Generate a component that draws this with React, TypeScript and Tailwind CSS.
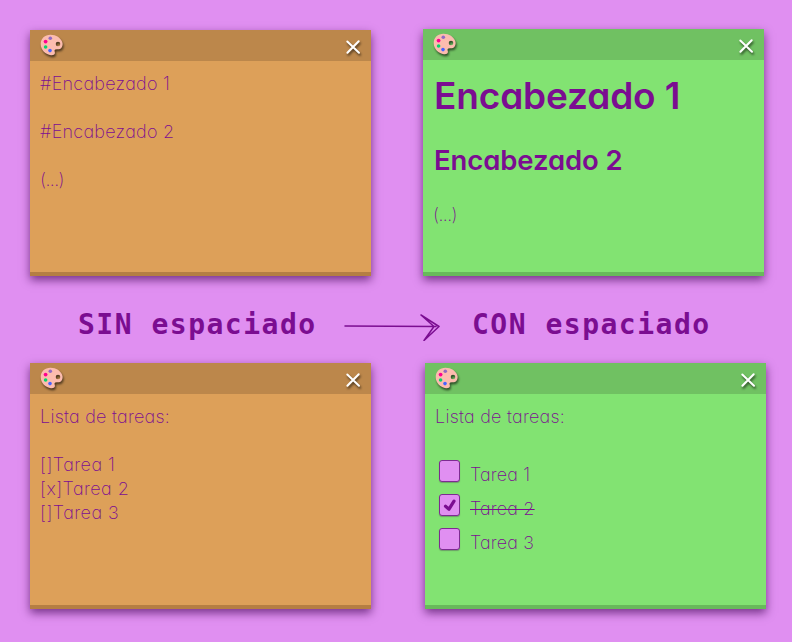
import type { ReactNode } from 'react';

function Palette() {
  return (
    <svg className="h-[26px] w-[26px] overflow-visible drop-shadow-[1px_2px_1px_rgba(0,0,0,0.6)]" viewBox="0 0 26 26">
      <path
        fillRule="evenodd"
        fill="#fcbcaf"
        d="M11.500 1.700C5.800 1.700 1.700 5.600 1.700 11c0 6 5 10.800 10.300 11.200 2.600.2 4.300-.8 3.900-2.600-.3-1.500-.8-2.600.4-3.100 2-.7 4.500.2 6-1.600 1.400-1.700 1.700-3.600.9-5.800C21.700 4.800 17.400 1.700 11.500 1.700ZM19 8.700a2.300 2.300 0 1 1 0 4.600 2.300 2.300 0 0 1 0-4.600Z"
      />
      <circle cx="11.300" cy="5.300" r="1.800" fill="#9269c4" />
      <circle cx="6.600" cy="8.600" r="1.900" fill="#ff0090" />
      <circle cx="6.600" cy="14" r="1.800" fill="#08d66b" />
      <circle cx="11" cy="17.600" r="1.800" fill="#4763ff" />
    </svg>
  );
}

function Close() {
  return (
    <svg className="h-4 w-4 overflow-visible drop-shadow-[1px_2px_1px_rgba(0,0,0,0.6)]" viewBox="0 0 16 16" fill="none" stroke="#fff" strokeWidth="2" strokeLinecap="round">
      <path d="M2.300 2.500 14 13.700M13.700 2.300 2.400 13.800" />
    </svg>
  );
}

function Note({ color, tall = false, children }: { color: 'orange' | 'green'; tall?: boolean; children: ReactNode }) {
  const orange = color === 'orange';
  return (
    <section
      className={`flex w-[341px] shrink-0 flex-col border-b-4 shadow-[0_4px_9px_rgba(60,0,80,0.65)] ${tall ? 'h-[247px]' : 'h-[246px]'} ${
        orange ? 'border-[#b57e43] bg-[#dda059]' : 'border-[#68b95b] bg-[#82e372]'
      }`}
    >
      <header className={`flex h-[31px] shrink-0 items-center justify-between pr-[10px] pl-[9px] ${orange ? 'bg-[#bc874b]' : 'bg-[#70c162]'}`}>
        <Palette />
        <div className="pt-[2px]"><Close /></div>
      </header>
      <div className="flex flex-col pl-[10px]">{children}</div>
    </section>
  );
}

function Task({ label, done = false }: { label: string; done?: boolean }) {
  return (
    <div className="flex h-[34px] items-center">
      <span className="mb-[6px] ml-1 flex h-[22px] w-[21px] items-center justify-center rounded-[3px] border border-[#7d2b91] bg-[#e08ff1] shadow-[0_1px_1px_rgba(60,0,80,0.3)]">
        {done && (
          <svg className="h-[14px] w-[14px]" viewBox="0 0 14 14" fill="none" stroke="#7b0d91" strokeWidth="3.200" strokeLinecap="round" strokeLinejoin="round">
            <path d="m2.500 8.300 3.500 2.900 5-8" />
          </svg>
        )}
      </span>
      <span className={`ml-[10px] mt-px tracking-[0.15px] ${done ? 'line-through decoration-1' : ''}`}>{label}</span>
    </div>
  );
}

function Caption({ children }: { children: ReactNode }) {
  return (
    <h2 className="mt-[10px] w-[238px] whitespace-pre font-['DejaVu_Sans_Mono',monospace] text-[28px] leading-[36px] font-bold tracking-[1.5px]">{children}</h2>
  );
}

export default function App() {
  return (
    <main className="h-[642px] w-[792px] overflow-hidden bg-[#e08ff1] pt-[30px] pl-[30px] font-['Inter',sans-serif] text-[18px] leading-6 font-[250] tracking-[0.25px] text-[#7b0d91] [font-feature-settings:'cv11']">
      <div className="flex h-[246px] gap-[52px]">
        <Note color="orange">
          <p className="mt-[11px]">#Encabezado 1</p>
          <p className="mt-6">#Encabezado 2</p>
          <p className="mt-6 tracking-[-0.6px]">(...)</p>
        </Note>
        <div className="-mt-px">
          <Note color="green" tall>
            <h1 className="mt-[14px] ml-px text-[37px] leading-[44px] font-[590] tracking-[-0.15px]">Encabezado 1</h1>
            <h2 className="mt-[24px] ml-px text-[27.500px] leading-9 font-[590] tracking-[-0.1px]">Encabezado 2</h2>
            <p className="mt-[25px] tracking-[-0.6px]">(...)</p>
          </Note>
        </div>
      </div>
      <div className="flex h-[87px] items-center pl-[48px]">
        <Caption>SIN espaciado</Caption>
        <svg className="mx-[28px] mt-[13px] h-[30px] w-[100px]" viewBox="0 0 100 30" fill="none" stroke="#7b0d91" strokeWidth="1.500" strokeLinecap="round" strokeLinejoin="round">
          <path d="m1 15 91 .6M77 4l18 11.500-15 14L90 15.500 77 4Z" />
        </svg>
        <Caption>CON espaciado</Caption>
      </div>
      <div className="flex gap-[54px]">
        <Note color="orange">
          <p className="mt-[11px] tracking-[0.25px]">Lista de tareas:</p>
          <p className="mt-6 tracking-[0.45px]">[]Tarea 1</p>
          <p className="tracking-[0.45px]">[x]Tarea 2</p>
          <p className="tracking-[0.45px]">[]Tarea 3</p>
        </Note>
        <Note color="green">
          <p className="mt-[11px] tracking-[0.25px]">Lista de tareas:</p>
          <div className="mt-[28px]">
            <Task label="Tarea 1" />
            <Task label="Tarea 2" done />
            <Task label="Tarea 3" />
          </div>
        </Note>
      </div>
    </main>
  );
}
